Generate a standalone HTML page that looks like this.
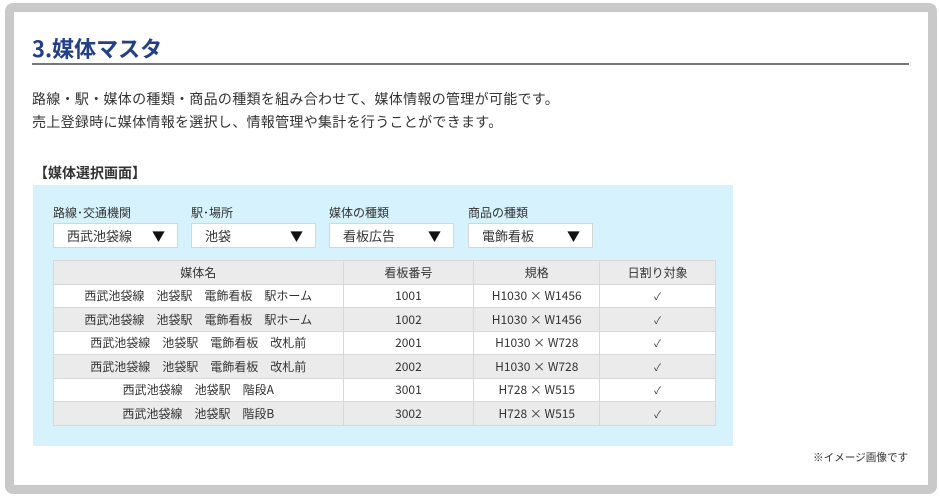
<!DOCTYPE html>
<html><head><meta charset="utf-8"><style>
*{margin:0;padding:0;box-sizing:border-box}
body{width:940px;height:496px;background:#fff;font-family:"Liberation Sans","Noto Sans CJK JP",sans-serif;color:#333;position:relative;overflow:hidden}
.frame{position:absolute;left:5px;top:3px;width:932px;height:491px;border:9px solid #c9c9c9;border-radius:8px;background:#fff}
.abs{position:absolute;white-space:nowrap}
h1{position:absolute;left:32px;top:32px;font-size:22px;color:#233f86;font-weight:bold;font-family:"Noto Sans CJK JP",sans-serif}
.rule{position:absolute;left:32px;top:63px;width:877px;height:2px;background:#777}
.p{font-size:14px;color:#333;font-family:"Noto Sans CJK JP",sans-serif;letter-spacing:0.3px}
.blue{position:absolute;left:33px;top:185px;width:700px;height:261px;background:#d6f2fc}
.lbl{font-size:12px;font-family:"Noto Sans CJK JP",sans-serif}
.sel{position:absolute;top:223px;width:125px;height:25px;background:#fff;border:1px solid #d6d6d6;font-size:13px;padding-left:13px;line-height:23px;font-family:"Noto Sans CJK JP",sans-serif}
.sel span{position:absolute;right:12px;top:0;font-size:13px;color:#111}
table{position:absolute;left:53px;top:260px;width:663px;border-collapse:collapse;font-size:12px;font-family:"Noto Sans CJK JP",sans-serif}
td{border:1px solid #d8d8d8;height:23.5px;text-align:center;padding:0}
tr:nth-child(odd) td{background:#ebebeb}
tr:nth-child(even) td{background:#fff}
.ck{font-size:10px}
</style></head><body>
<div class="frame"></div>
<h1>3.媒体マスタ</h1>
<div class="rule"></div>
<div class="abs p" style="left:32px;top:89px">路線・駅・媒体の種類・商品の種類を組み合わせて、媒体情報の管理が可能です。</div>
<div class="abs p" style="left:32px;top:112px">売上登録時に媒体情報を選択し、情報管理や集計を行うことができます。</div>
<div class="abs p" style="left:34px;top:163px;font-weight:bold;letter-spacing:0">【媒体選択画面】</div>
<div class="blue"></div>
<div class="abs lbl" style="left:53px;top:204px">路線･交通機関</div>
<div class="abs lbl" style="left:191px;top:204px">駅･場所</div>
<div class="abs lbl" style="left:329px;top:204px">媒体の種類</div>
<div class="abs lbl" style="left:468px;top:204px">商品の種類</div>
<div class="sel" style="left:53px">西武池袋線<span>▼</span></div>
<div class="sel" style="left:191px">池袋<span>▼</span></div>
<div class="sel" style="left:329px">看板広告<span>▼</span></div>
<div class="sel" style="left:468px">電飾看板<span>▼</span></div>
<table>
<colgroup><col style="width:290px"><col style="width:131px"><col style="width:126px"><col style="width:116px"></colgroup>
<tr><td>媒体名</td><td>看板番号</td><td>規格</td><td>日割り対象</td></tr>
<tr><td>西武池袋線　池袋駅　電飾看板　駅ホーム</td><td>1001</td><td>H1030 × W1456</td><td class="ck">✓</td></tr>
<tr><td>西武池袋線　池袋駅　電飾看板　駅ホーム</td><td>1002</td><td>H1030 × W1456</td><td class="ck">✓</td></tr>
<tr><td>西武池袋線　池袋駅　電飾看板　改札前</td><td>2001</td><td>H1030 × W728</td><td class="ck">✓</td></tr>
<tr><td>西武池袋線　池袋駅　電飾看板　改札前</td><td>2002</td><td>H1030 × W728</td><td class="ck">✓</td></tr>
<tr><td>西武池袋線　池袋駅　階段A</td><td>3001</td><td>H728 × W515</td><td class="ck">✓</td></tr>
<tr><td>西武池袋線　池袋駅　階段B</td><td>3002</td><td>H728 × W515</td><td class="ck">✓</td></tr>
</table>
<div class="abs" style="left:813px;top:450px;font-size:10.6px;font-family:'Noto Sans CJK JP',sans-serif">※イメージ画像です</div>
</body></html>
